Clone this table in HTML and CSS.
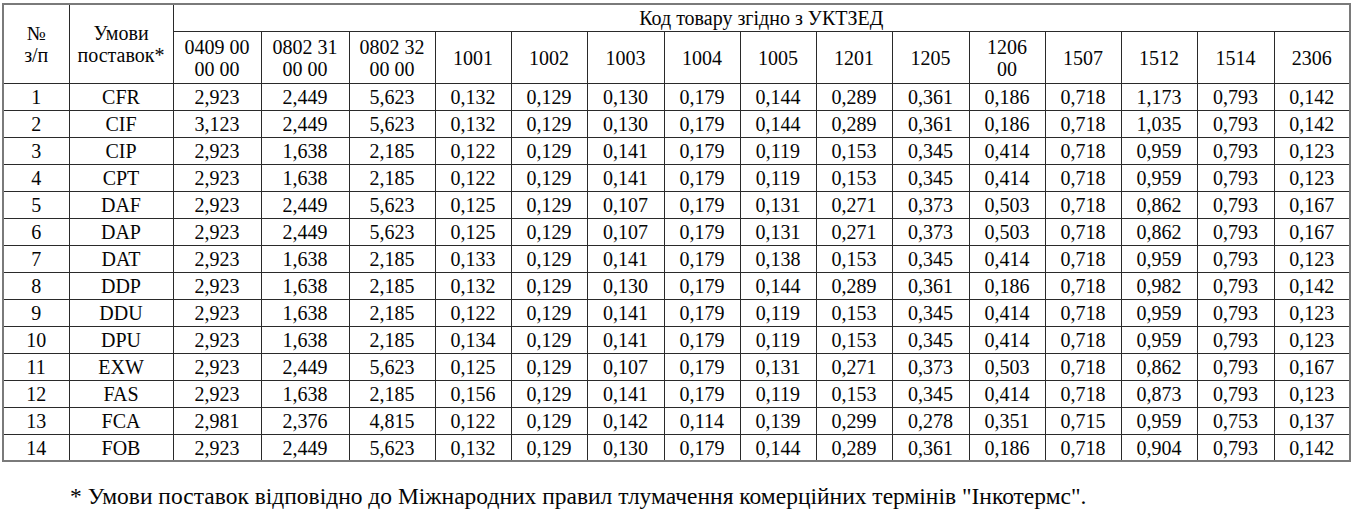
FILE: index.html
```html
<!DOCTYPE html>
<html lang="uk">
<head>
<meta charset="utf-8">
<title>Таблиця</title>
<link rel="stylesheet" href="styles.css">
</head>
<body>
<div class="page">
<table class="grid">
<colgroup>
<col class="c-num"><col class="c-term"><col class="c-wide"><col class="c-wide"><col class="c-mid">
<col class="c-n"><col class="c-n"><col class="c-w"><col class="c-n"><col class="c-n"><col class="c-n"><col class="c-w"><col class="c-n"><col class="c-n"><col class="c-n"><col class="c-w"><col class="c-n">
</colgroup>
<thead>
<tr class="h1">
<th rowspan="2">№<br>з/п</th>
<th rowspan="2">Умови<br>поставок*</th>
<th colspan="15">Код товару згідно з УКТЗЕД</th>
</tr>
<tr class="h2">
<th>0409 00<br>00 00</th><th>0802 31<br>00 00</th><th>0802 32<br>00 00</th><th>1001</th><th>1002</th><th>1003</th><th>1004</th><th>1005</th><th>1201</th><th>1205</th><th>1206<br>00</th><th>1507</th><th>1512</th><th>1514</th><th>2306</th>
</tr>
</thead>
<tbody>
<tr><td>1</td><td>CFR</td><td>2,923</td><td>2,449</td><td>5,623</td><td>0,132</td><td>0,129</td><td>0,130</td><td>0,179</td><td>0,144</td><td>0,289</td><td>0,361</td><td>0,186</td><td>0,718</td><td>1,173</td><td>0,793</td><td>0,142</td></tr>
<tr><td>2</td><td>CIF</td><td>3,123</td><td>2,449</td><td>5,623</td><td>0,132</td><td>0,129</td><td>0,130</td><td>0,179</td><td>0,144</td><td>0,289</td><td>0,361</td><td>0,186</td><td>0,718</td><td>1,035</td><td>0,793</td><td>0,142</td></tr>
<tr><td>3</td><td>CIP</td><td>2,923</td><td>1,638</td><td>2,185</td><td>0,122</td><td>0,129</td><td>0,141</td><td>0,179</td><td>0,119</td><td>0,153</td><td>0,345</td><td>0,414</td><td>0,718</td><td>0,959</td><td>0,793</td><td>0,123</td></tr>
<tr><td>4</td><td>CPT</td><td>2,923</td><td>1,638</td><td>2,185</td><td>0,122</td><td>0,129</td><td>0,141</td><td>0,179</td><td>0,119</td><td>0,153</td><td>0,345</td><td>0,414</td><td>0,718</td><td>0,959</td><td>0,793</td><td>0,123</td></tr>
<tr><td>5</td><td>DAF</td><td>2,923</td><td>2,449</td><td>5,623</td><td>0,125</td><td>0,129</td><td>0,107</td><td>0,179</td><td>0,131</td><td>0,271</td><td>0,373</td><td>0,503</td><td>0,718</td><td>0,862</td><td>0,793</td><td>0,167</td></tr>
<tr><td>6</td><td>DAP</td><td>2,923</td><td>2,449</td><td>5,623</td><td>0,125</td><td>0,129</td><td>0,107</td><td>0,179</td><td>0,131</td><td>0,271</td><td>0,373</td><td>0,503</td><td>0,718</td><td>0,862</td><td>0,793</td><td>0,167</td></tr>
<tr><td>7</td><td>DAT</td><td>2,923</td><td>1,638</td><td>2,185</td><td>0,133</td><td>0,129</td><td>0,141</td><td>0,179</td><td>0,138</td><td>0,153</td><td>0,345</td><td>0,414</td><td>0,718</td><td>0,959</td><td>0,793</td><td>0,123</td></tr>
<tr><td>8</td><td>DDP</td><td>2,923</td><td>1,638</td><td>2,185</td><td>0,132</td><td>0,129</td><td>0,130</td><td>0,179</td><td>0,144</td><td>0,289</td><td>0,361</td><td>0,186</td><td>0,718</td><td>0,982</td><td>0,793</td><td>0,142</td></tr>
<tr><td>9</td><td>DDU</td><td>2,923</td><td>1,638</td><td>2,185</td><td>0,122</td><td>0,129</td><td>0,141</td><td>0,179</td><td>0,119</td><td>0,153</td><td>0,345</td><td>0,414</td><td>0,718</td><td>0,959</td><td>0,793</td><td>0,123</td></tr>
<tr><td>10</td><td>DPU</td><td>2,923</td><td>1,638</td><td>2,185</td><td>0,134</td><td>0,129</td><td>0,141</td><td>0,179</td><td>0,119</td><td>0,153</td><td>0,345</td><td>0,414</td><td>0,718</td><td>0,959</td><td>0,793</td><td>0,123</td></tr>
<tr><td>11</td><td>EXW</td><td>2,923</td><td>2,449</td><td>5,623</td><td>0,125</td><td>0,129</td><td>0,107</td><td>0,179</td><td>0,131</td><td>0,271</td><td>0,373</td><td>0,503</td><td>0,718</td><td>0,862</td><td>0,793</td><td>0,167</td></tr>
<tr><td>12</td><td>FAS</td><td>2,923</td><td>1,638</td><td>2,185</td><td>0,156</td><td>0,129</td><td>0,141</td><td>0,179</td><td>0,119</td><td>0,153</td><td>0,345</td><td>0,414</td><td>0,718</td><td>0,873</td><td>0,793</td><td>0,123</td></tr>
<tr><td>13</td><td>FCA</td><td>2,981</td><td>2,376</td><td>4,815</td><td>0,122</td><td>0,129</td><td>0,142</td><td>0,114</td><td>0,139</td><td>0,299</td><td>0,278</td><td>0,351</td><td>0,715</td><td>0,959</td><td>0,753</td><td>0,137</td></tr>
<tr><td>14</td><td>FOB</td><td>2,923</td><td>2,449</td><td>5,623</td><td>0,132</td><td>0,129</td><td>0,130</td><td>0,179</td><td>0,144</td><td>0,289</td><td>0,361</td><td>0,186</td><td>0,718</td><td>0,904</td><td>0,793</td><td>0,142</td></tr>
</tbody>
</table>
<p class="note">* Умови поставок відповідно до Міжнародних правил тлумачення комерційних термінів "Інкотермс".</p>
</div>
</body>
</html>
```

FILE: styles.css
```css
html, body {
  margin: 0;
  padding: 0;
  background: #fff;
}
.page {
  padding: 3px 0 0 2px;
  font-family: "Liberation Serif", "Times New Roman", serif;
  font-size: 20px;
  color: #050505;
}
.grid {
  border-collapse: collapse;
  table-layout: fixed;
  width: 1348px;
  border: 2px solid #7a7a7a;
}
.c-num { width: 66px; }
.c-term { width: 104px; }
.c-wide { width: 88px; }
.c-mid { width: 86px; }
.c-n { width: 76px; }
.c-w { width: 77px; }
.grid th, .grid td {
  border: 1px solid #2a2a2a;
  padding: 1px 0 0;
  text-align: center;
  vertical-align: middle;
  font-weight: normal;
  line-height: 22px;
}
.grid .h1 { height: 27px; }
.grid .h2 { height: 52px; }
.grid tbody tr { height: 27px; }
.note {
  margin: 21px 0 0 68px;
  font-size: 23.5px;
  line-height: 26px;
}
```
